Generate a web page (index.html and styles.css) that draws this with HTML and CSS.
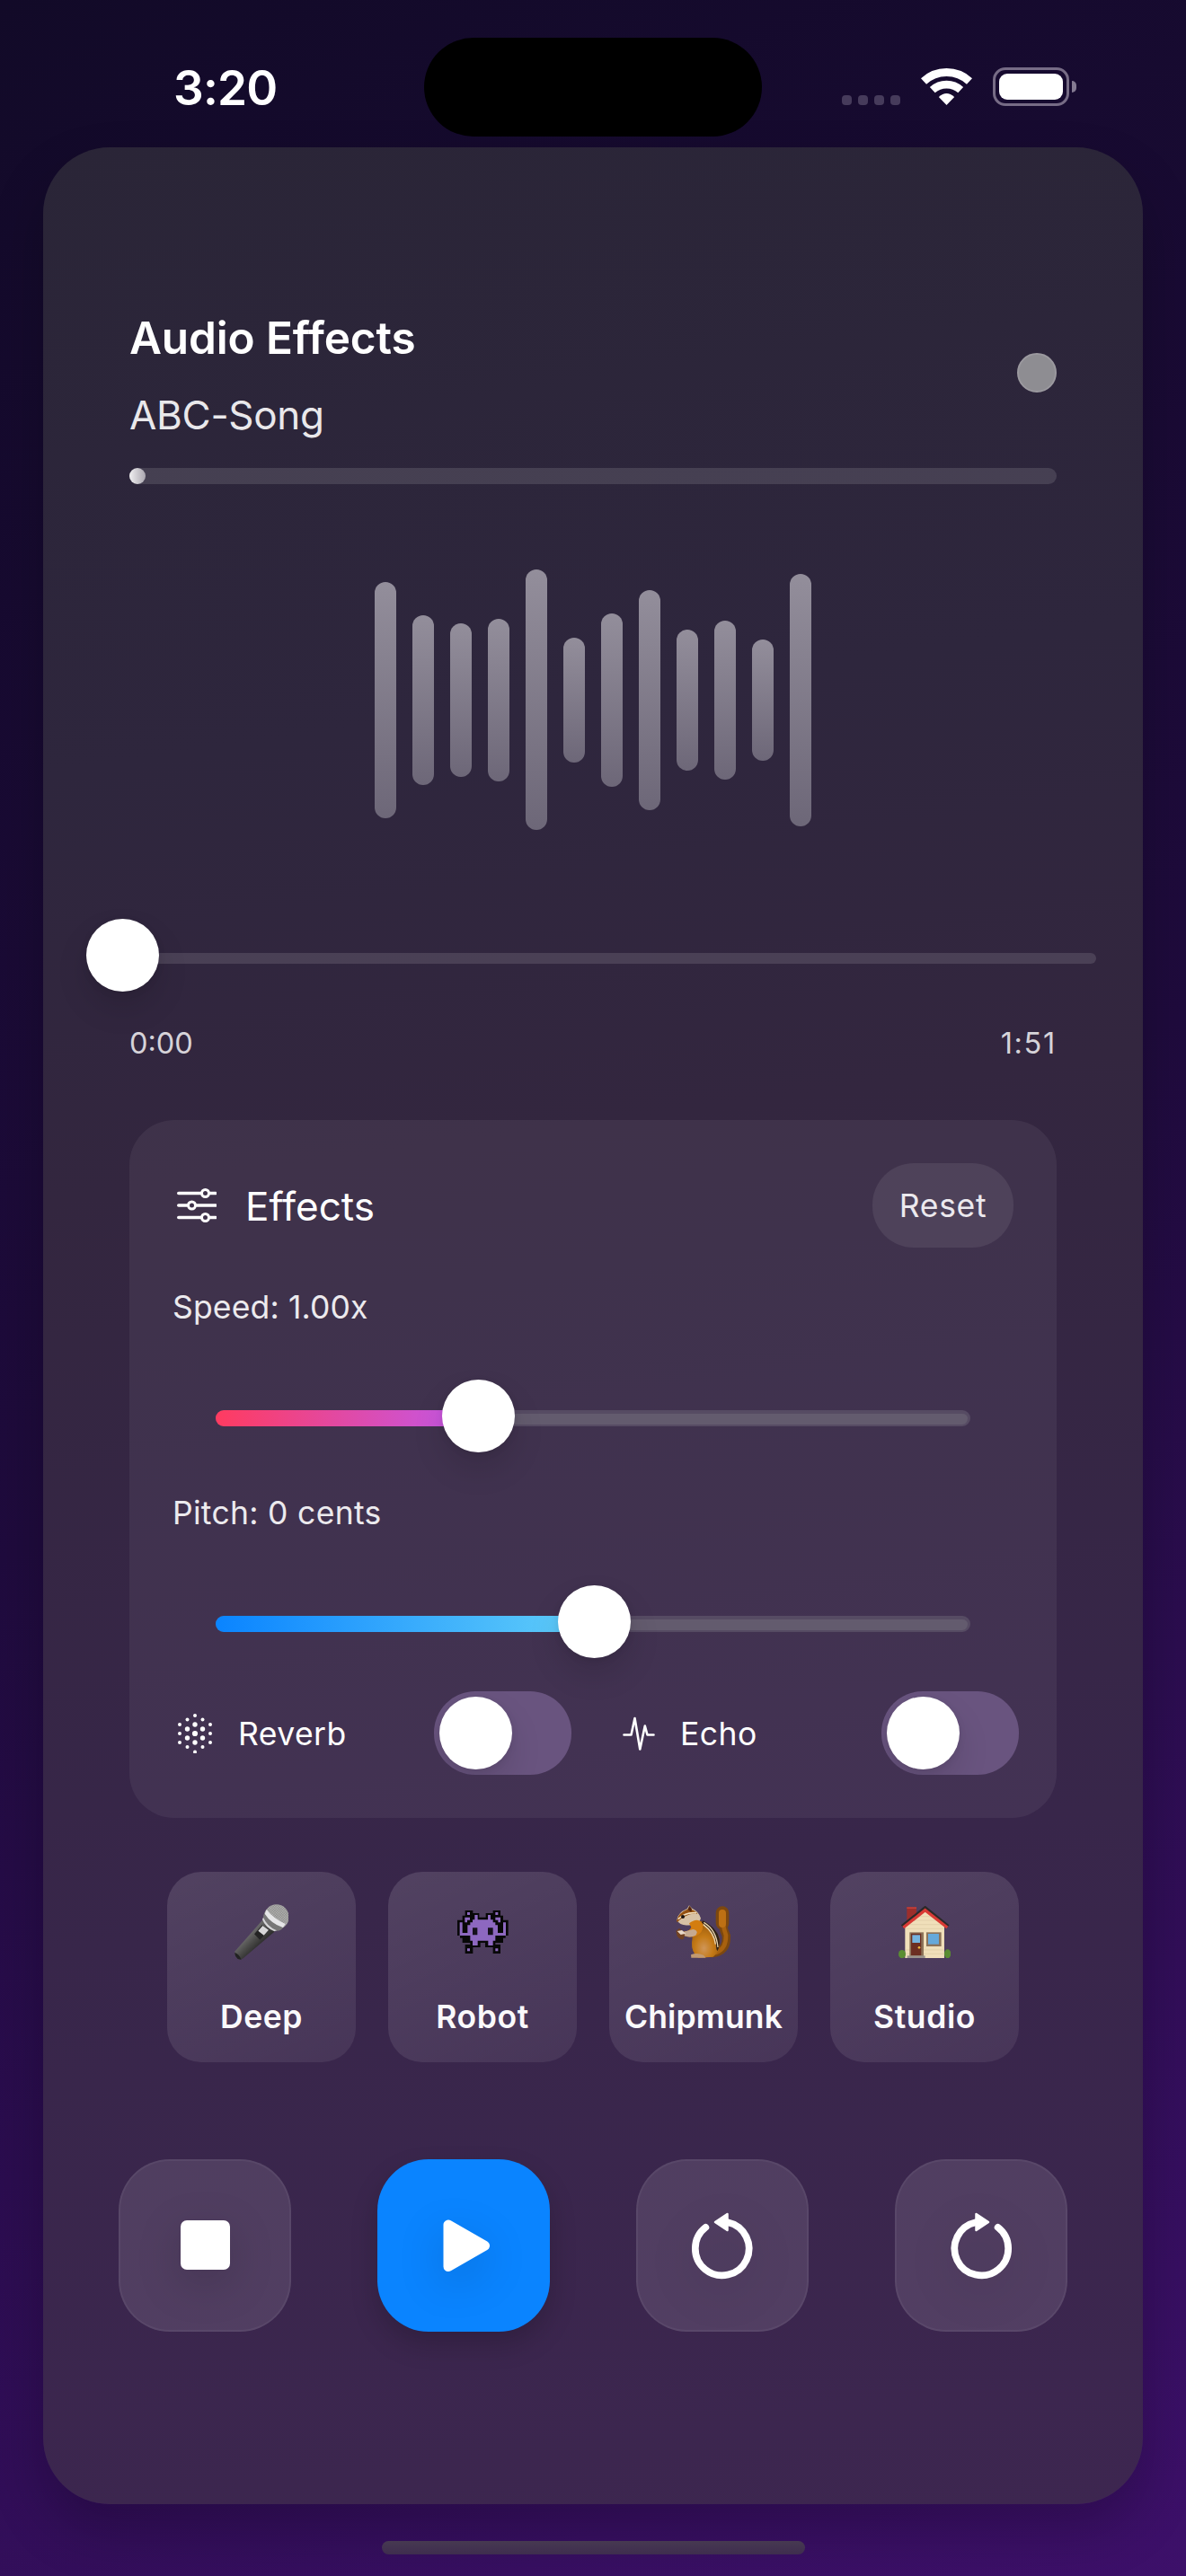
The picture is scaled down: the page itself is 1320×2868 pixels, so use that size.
FILE: index.html
```html
<!DOCTYPE html>
<html lang="en">
<head>
<meta charset="utf-8">
<title>Audio Effects</title>
<link rel="stylesheet" href="styles.css">
</head>
<body>
<div class="screen">
  <header class="status">
    <div class="status-side"><span class="clock">3:20</span></div>
    <div class="island"></div>
    <div class="status-side status-right">
      <div class="cell"><i></i><i></i><i></i><i></i></div>
      <svg class="wifi" viewBox="0 0 57 42" width="57" height="42">
        <g fill="none" stroke="#fff">
          <path d="M3 15.5A37.5 37.5 0 0 1 54 15.5" stroke-width="9"/>
          <path d="M12.8 25.2A23.2 23.2 0 0 1 44.2 25.2" stroke-width="8.6"/>
        </g>
        <path d="M28.5 42L19.8 33Q28.500 25 37.200 33Z" fill="#fff"/>
      </svg>
      <div class="battery"><div class="battery-fill"></div></div>
      <div class="battery-nub"></div>
    </div>
  </header>

  <main class="player">
    <section class="header">
      <div>
        <h1 class="title">Audio Effects</h1>
        <p class="song">ABC-Song</p>
      </div>
      <div class="indicator"></div>
    </section>
    <div class="progress"><div class="progress-fill"></div></div>

    <div class="wave">
      <i style="height:263px"></i><i style="height:189px"></i><i style="height:171px"></i><i style="height:181px"></i><i style="height:290px"></i><i style="height:139px"></i><i style="height:193px"></i><i style="height:245px"></i><i style="height:157px"></i><i style="height:177px"></i><i style="height:135px"></i><i style="height:281px"></i>
    </div>

    <div class="seek"><div class="seek-track"></div><div class="knob"></div></div>
    <div class="times"><span>0:00</span><span class="total">1:51</span></div>

    <section class="effects">
      <div class="effects-head">
        <svg class="sliders-icon" viewBox="0 0 44 40" width="44" height="40" fill="none" stroke="#fff" stroke-width="3.6" stroke-linecap="round">
          <path d="M1.800 6.500H26M37 6.500H43M1.800 20H11M22 20H43M1.800 33.500H26M37 33.500H43"/>
          <g stroke-width="3"><circle cx="31.500" cy="6.500" r="4"/><circle cx="16.500" cy="20" r="4"/><circle cx="31.500" cy="33.500" r="4"/></g>
        </svg>
        <h2 class="effects-title">Effects</h2>
        <button class="reset">Reset</button>
      </div>

      <div class="label">Speed: 1.00x</div>
      <div class="slider"><div class="track"></div><div class="fill speed" style="width:300px"></div><div class="knob" style="left:252px"></div></div>

      <div class="label pitch-label">Pitch: 0 cents</div>
      <div class="slider"><div class="track"></div><div class="fill pitch" style="width:420px"></div><div class="knob" style="left:381px"></div></div>

      <div class="toggles">
        <svg class="reverb-icon" viewBox="-22 -22 44 44" width="44" height="44" fill="#fff">
          <g><circle cy="-20" r="2"/><circle cy="20.500" r="2"/><circle cx="-8.500" cy="-15.500" r="2"/><circle cx="8.500" cy="-15.500" r="2"/><circle cx="-8.500" cy="15" r="2"/><circle cx="8.500" cy="15" r="2"/><circle cx="-17" cy="-10" r="2"/><circle cx="17" cy="-10" r="2"/><circle cx="-17" r="2"/><circle cx="17" r="2"/><circle cx="-17" cy="10" r="2"/><circle cx="17" cy="10" r="2"/></g>
          <g><circle cy="-10" r="2.700"/><circle cy="10" r="2.700"/><circle cx="-8.500" cy="-5" r="2.700"/><circle cx="8.500" cy="-5" r="2.700"/><circle cx="-8.500" cy="5" r="2.700"/><circle cx="8.500" cy="5" r="2.700"/><circle r="3.100"/></g>
        </svg>
        <span class="toggle-name reverb-name">Reverb</span>
        <div class="toggle"><div class="knob"></div></div>
        <svg class="echo-icon" viewBox="0 0 36 38" width="36" height="38" fill="none" stroke="#fff" stroke-width="2.600" stroke-linejoin="round" stroke-linecap="round"><path d="M1.500 20.500H9.500L13.500 2L19.300 36.500L24.800 10.500L27.500 20.500H34.500"/></svg>
        <span class="toggle-name echo-name">Echo</span>
        <div class="toggle"><div class="knob"></div></div>
      </div>
    </section>

    <section class="presets">
      <button class="preset">
        <svg viewBox="272 150 182 186" width="60.700" height="62">
          <defs>
            <linearGradient id="handle" x1="0" y1="0" x2="1" y2="1"><stop offset=".35" stop-color="#6d6d6d"/><stop offset=".5" stop-color="#4a4a48"/><stop offset=".68" stop-color="#222"/></linearGradient>
            <pattern id="mesh" width="6" height="6" patternUnits="userSpaceOnUse" patternTransform="rotate(40)"><rect width="6" height="6" fill="#b9b9b7"/><path d="M0 0H6M0 0V6" stroke="#666" stroke-width="2"/></pattern>
          </defs>
          <path d="M370 198L274 307Q270 320 282 332Q292 338 301 331L412 236Z" fill="url(#handle)"/>
          <path d="M273 312Q286 316 295 335L283 333Q271 322 273 312Z" fill="#222"/>
          <circle cx="412" cy="193" r="42" fill="url(#mesh)"/>
          <path d="M374 176Q390 212 434 229Q426 241 411 239Q383 226 368 197Q368 184 374 176Z" fill="#777"/>
          <path d="M379 168Q402 198 442 216L434 228Q392 213 373 182Z" fill="#e6e6e8"/>
          <path d="M368 194Q380 224 413 238L405 241Q375 228 365 201Z" fill="#d4d4d6"/>
          <path d="M364 220L388 236L357 269L338 250Z" fill="#242424"/>
          <path d="M366 222L386 236L370 254L351 239Z" fill="#d7d7d8"/>
        </svg>
        <span class="wide">Deep</span>
      </button>
      <button class="preset">
        <svg viewBox="1017 177 171 144" width="57" height="48">
          <path fill="#080808" d="M1043 177H1069V186H1090V200H1112V186H1136V177H1161V194H1170V209H1187V261H1178V269H1170V285H1144V291H1161V321H1136V300H1110V285H1094V300H1069V321H1043V291H1060V285H1034V269H1026V261H1017V209H1034V194H1043Z"/>
          <g fill="#8d68c0">
            <path d="M1075 192H1085V208H1119V192H1128V208H1136V217H1144V226H1152V252H1170V217H1179V261H1144V278H1136V294H1120V278H1085V294H1068V278H1060V261H1025V217H1034V252H1051V226H1060V217H1068V208H1075Z"/>
            <path d="M1050 183H1059V192H1050ZM1144 183H1153V192H1144ZM1042 200H1059V209H1050V217H1042ZM1144 200H1161V217H1153V209H1144ZM1050 304H1059V313H1050ZM1144 304H1153V313H1144Z"/>
          </g>
          <path fill="#15101c" d="M1068 235H1084V259H1068ZM1119 235H1136V259H1119Z"/>
        </svg>
        <span class="wide">Robot</span>
      </button>
      <button class="preset">
        <svg viewBox="277 155 186 178" width="62" height="59.300">
          <defs>
            <radialGradient id="belly" cx=".45" cy=".75" r=".7"><stop offset="0" stop-color="#cf9558"/><stop offset=".45" stop-color="#c47a16"/><stop offset="1" stop-color="#96570f"/></radialGradient>
          </defs>
          <g fill="none" stroke-linecap="round">
            <path d="M398 316Q449 312 446 258Q428 220 433 180" stroke="#7d480f" stroke-width="28"/>
            <path d="M433 215V181" stroke="#7d480f" stroke-width="44"/>
            <path d="M412 314Q446 302 445 256Q432 220 434 180" stroke="#a8610f" stroke-width="14"/>
            <path d="M433 218V182" stroke="#bd7014" stroke-width="24"/>
          </g>
          <path d="M352 205Q412 225 424 270Q428 312 402 328L352 331Q329 312 331 280Q336 250 328 228Z" fill="url(#belly)"/>
          <path d="M368 207Q414 230 423 268Q425 292 417 308Q412 306 412 285Q408 242 364 214Z" fill="#2d2015"/>
          <path d="M371 213Q413 238 418 296M369 220Q405 246 410 286" fill="none" stroke="#ead5ae" stroke-width="4"/>
          <path d="M281 205Q285 179 315 168L322 156L332 166Q354 176 361 199Q358 217 327 222Q292 226 281 205Z" fill="#d8c2a5"/>
          <path d="M281 205Q287 180 317 169Q340 168 350 184Q315 180 281 213Z" fill="#95500f"/>
          <path d="M285 202Q309 178 346 181" fill="none" stroke="#f2dfbd" stroke-width="5"/>
          <path d="M317 170L323 157L331 168L329 178Z" fill="#53250c"/>
          <circle cx="301" cy="194" r="6" fill="#17110f"/>
          <path d="M322 216Q350 195 366 216Q374 244 346 258Q322 266 305 257L304 244Q324 242 329 229Z" fill="#d37d10"/>
          <path d="M305 244L335 236Q355 240 344 256Q325 266 305 257Z" fill="#c6aa91"/>
          <path d="M278 241L289 233L304 244Q310 254 303 268Q293 274 282 259Z" fill="#714122"/>
          <path d="M282 242L298 239L311 250L294 254Z" fill="#e9d8c8"/>
          <path d="M328 321Q348 312 370 322L378 331H329Z" fill="#c29a72"/>
        </svg>
        <span>Chipmunk</span>
      </button>
      <button class="preset">
        <svg viewBox="1020 155 175 176" width="58.300" height="58.700">
          <path d="M1048 159H1080V185L1048 208Z" fill="#9d2e2b"/><path d="M1048 159H1080V164H1048Z" fill="#c1413b"/>
          <path d="M1042 220L1109 166L1173 220V329H1042Z" fill="#f0dfba"/>
          <path d="M1044 231H1171M1044 217H1171M1067 203H1150M1082 190H1134M1044 302H1171M1044 315H1171" stroke="#dccaa3" stroke-width="2"/>
          <path d="M1032 223L1109 161L1186 223" fill="none" stroke="#2b2929" stroke-width="11"/>
          <path d="M1036 227L1109 169L1183 227" fill="none" stroke="#d93a35" stroke-width="10"/>
          <ellipse cx="1032" cy="316" rx="12" ry="14" fill="#5a8d32"/><ellipse cx="1184" cy="315" rx="11" ry="15" fill="#5a8d32"/>
          <path d="M1057 243H1104V323H1057Z" fill="#8c7359"/><path d="M1062 247H1096V320H1062Z" fill="#6c2f22"/>
          <path d="M1066 252H1092V278H1066Z" fill="#75b4df"/><circle cx="1089" cy="294" r="4" fill="#efb83d"/>
          <path d="M1113 243H1163V290H1113Z" fill="#8c7359"/><path d="M1119 248H1155V283H1119Z" fill="#66a9da"/>
          <path d="M1049 321H1109V331H1049Z" fill="#99928b"/>
        </svg>
        <span class="wide">Studio</span>
      </button>
    </section>

    <section class="controls">
      <button class="control"><svg viewBox="0 0 192 192"><rect x="69" y="68" width="55" height="55" rx="7" fill="#fff"/></svg></button>
      <button class="control primary"><svg viewBox="0 0 192 192"><path d="M79 73V119.500L119.500 96.200Z" fill="#fff" stroke="#fff" stroke-width="11" stroke-linejoin="round"/></svg></button>
      <button class="control"><svg viewBox="0 0 192 192"><path d="M77.400 75.800A29.900 29.900 0 1 0 102 70.200" fill="none" stroke="#fff" stroke-width="7.700" stroke-linecap="round"/><path d="M88 70L101.500 61V79Z" fill="#fff" stroke="#fff" stroke-width="2.500" stroke-linejoin="round"/></svg></button>
      <button class="control flip"><svg viewBox="0 0 192 192"><path d="M77.400 75.800A29.900 29.900 0 1 0 102 70.200" fill="none" stroke="#fff" stroke-width="7.700" stroke-linecap="round"/><path d="M88 70L101.500 61V79Z" fill="#fff" stroke="#fff" stroke-width="2.500" stroke-linejoin="round"/></svg></button>
    </section>
  </main>
  <div class="home"></div>
</div>
</body>
</html>
```
FILE: styles.css
```css
* { box-sizing: border-box; }
html, body, h1, h2, p { margin: 0; }
body { width: 1320px; font-family: Inter, "Noto Sans", sans-serif; color: #fff; background: #1c0a38; }
button { border: 0; padding: 0; margin: 0; font: inherit; letter-spacing: inherit; color: inherit; background: none; }
svg { display: block; flex: none; }

.screen {
  width: 1320px;
  height: 2868px;
  overflow: hidden;
  display: flex;
  flex-direction: column;
  align-items: center;
  background: linear-gradient(155.3deg, #120a28 0%, #1f0b3d 50%, #3d106a 100%);
}

.status { width: 100%; height: 164px; display: flex; align-items: flex-start; }
.status-side { flex: none; width: 472px; display: flex; }
.clock { margin: 68px 0 0 193px; font-size: 53px; line-height: 60px; font-weight: 600; letter-spacing: -.8px; }
.island { flex: none; width: 376px; height: 110px; margin-top: 42px; border-radius: 55px; background: #000; }
.status-right { padding: 75px 0 0 89px; }
.cell { display: flex; gap: 7px; padding-top: 31px; }
.cell i { width: 11px; height: 11px; border-radius: 4px; background: #463b5b; }
.wifi { margin-left: 23px; }
.battery { width: 85px; height: 43px; margin-left: 23px; padding: 4px 3px; border: 3px solid #776c86; border-radius: 14px; }
.battery-fill { width: 71px; height: 29px; margin-left: 1px; border-radius: 9px; background: #fff; }
.battery-nub { width: 5px; height: 13px; margin: 15px 0 0 3px; border-radius: 0 5px 5px 0; background: #847a92; }

.player {
  width: 1224px;
  height: 2624px;
  padding: 182px 96px 0;
  border-radius: 74px;
  background: linear-gradient(172deg, #2a2537 0%, #2e263d 25%, #33263f 42%, #38264a 72%, #3d2650 100%);
  box-shadow: 0 30px 60px rgba(0, 0, 0, .22);
}

.header { display: flex; justify-content: space-between; align-items: flex-start; }
.title { font-size: 49.500px; line-height: 60px; font-weight: 600; letter-spacing: -.15px; }
.song { margin-top: 28px; font-size: 44px; line-height: 56px; letter-spacing: -.3px; color: #e9e8eb; }
.indicator { width: 44px; height: 44px; margin-top: 47px; border-radius: 50%; background: #8e8d92; border: 2px solid #9b999f; }

.progress { height: 18px; margin-top: 31px; border-radius: 9px; background: rgba(255, 255, 255, .12); }
.progress-fill { width: 18px; height: 18px; border-radius: 9px; background: linear-gradient(90deg, #f0eff1, #aaa6af); }

.wave { height: 290px; margin-top: 95px; display: flex; align-items: center; justify-content: center; gap: 18px; }
.wave i { width: 24px; border-radius: 12px; background: linear-gradient(#938e9b, #6d6778); }

.knob { width: 81px; height: 81px; border-radius: 50%; background: #fff; box-shadow: 0 18px 36px rgba(0, 0, 0, .12), 0 2px 9px rgba(0, 0, 0, .08); }
.seek { position: relative; height: 81px; margin: 99px -44px 0 -48px; padding-top: 38px; }
.seek .knob { position: absolute; left: 0; top: 0; }
.seek-track { height: 12px; border-radius: 6px; background: rgba(255, 255, 255, .12); }
.times { display: flex; justify-content: space-between; margin-top: 38px; font-size: 32.500px; line-height: 40px; color: #d6d3d9; }
.total { letter-spacing: 1.700px; }

.effects { height: 777px; margin-top: 65px; padding: 48px 48px 0; border-radius: 50px; background: rgba(255, 255, 255, .06); }
.effects-head { display: flex; align-items: center; height: 94px; }
.sliders-icon { margin-left: 5px; }
.effects-title { margin-left: 32px; padding-top: 2px; font-size: 44px; line-height: 56px; font-weight: 400; }
.reset { width: 157px; height: 94px; margin-left: auto; padding-top: 2px; border-radius: 46px; background: rgba(255, 255, 255, .08); font-size: 35.500px; line-height: 44px; letter-spacing: .7px; color: #ece9ee; }
.label { margin-top: 45px; font-size: 35.500px; line-height: 44px; letter-spacing: .15px; color: #eceaee; }
.pitch-label { margin-top: 46px; letter-spacing: .3px; }

.slider { position: relative; height: 81px; margin: 58px 48px 0; padding-top: 34px; }
.track { height: 18px; border-radius: 9px; background: #635b6e; border: 3px solid #564b63; border-top-width: 4px; border-bottom-width: 2px; }
.fill { position: absolute; left: 0; top: 34px; height: 18px; border-radius: 9px; }
.slider .knob { position: absolute; top: 0; }
.speed { background: linear-gradient(90deg, #ff3b60, #bf5af2); }
.pitch { background: linear-gradient(90deg, #0a84ff, #5ac8fa 90%); }

.toggles { display: flex; align-items: center; height: 93px; margin: 37px -6px 0 0; font-size: 35.500px; line-height: 44px; letter-spacing: .45px; }
.toggle-name { padding-top: 2px; }
.reverb-icon { margin-left: 3px; }
.reverb-name { width: 218px; margin-left: 26px; }
.toggle { width: 153px; height: 93px; padding: 6px; border-radius: 46px; background: #69547f; overflow: hidden; }
.echo-icon { margin-left: 57px; }
.echo-name { margin-left: 28px; margin-right: auto; }

.presets { display: grid; grid-template-columns: repeat(4, 210px); gap: 36px; justify-content: center; margin-top: 60px; }
.preset {
  height: 212px;
  display: grid;
  grid-template-rows: 134px 56px;
  justify-items: center;
  align-items: center;
  border-radius: 38px;
  background: linear-gradient(155deg, rgba(255, 255, 255, .13), rgba(255, 255, 255, .07));
  font-size: 35.500px;
  line-height: 56px;
  font-weight: 600;
  letter-spacing: .15px;
  color: #faf9fb;
  white-space: nowrap;
}
.wide { letter-spacing: .6px; }

.controls { display: flex; justify-content: space-between; margin: 108px -12px 0; }
.control { width: 192px; height: 192px; border-radius: 57px; background: rgba(255, 255, 255, .115); box-shadow: inset 0 0 0 2px rgba(255, 255, 255, .05); }
.control svg { width: 192px; height: 192px; filter: drop-shadow(0 14px 24px rgba(0, 0, 0, .15)); }
.primary { background: #0a84ff; box-shadow: 0 14px 30px rgba(0, 0, 0, .18); }
.flip svg { transform: scaleX(-1); }

.home { width: 471px; height: 15px; margin-top: 41px; border-radius: 8px; background: linear-gradient(#463951, #3f2d4f); }
```
